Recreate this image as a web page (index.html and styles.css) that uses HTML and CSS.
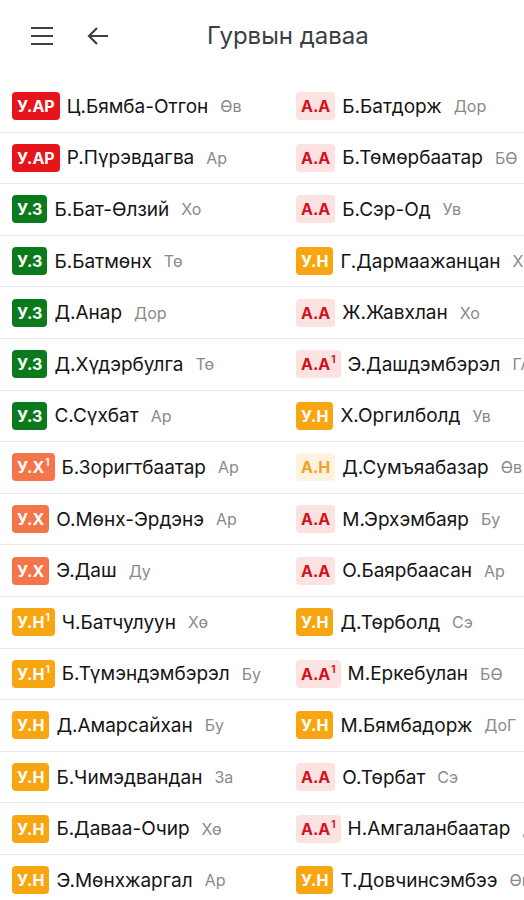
FILE: index.html
```html
<!DOCTYPE html>
<html lang="mn">
<head>
    <meta charset="utf-8">
    <meta name="viewport" content="width=device-width, initial-scale=1">
    <title>Гурвын даваа</title>

    <link rel="stylesheet" href="styles.css">
</head>
<body>
    <div class="header">
        <svg class="icon" width="24" height="24" viewBox="0 0 24 24">
            <path d="M1 4h22M1 12h22M1 20h22" stroke="#3c4043" stroke-width="2.2" fill="none"/>
        </svg>
        <svg class="icon back" width="22" height="20" viewBox="0 0 22 20">
            <path d="M21 10H2M10 2L2 10l8 8" stroke="#3c4043" stroke-width="2.2" fill="none" stroke-linejoin="miter"/>
        </svg>
        <h1 class="title">Гурвын даваа</h1>
    </div>

    <div class="list" id="list"></div>

    <script type="text/javascript">
        let rows=[
            [["ar","У.АР"],"Ц.Бямба-Отгон","Өв",["aa","А.А"],"Б.Батдорж","Дор"],
            [["ar","У.АР"],"Р.Пүрэвдагва","Ар",["aa","А.А"],"Б.Төмөрбаатар","БӨ"],
            [["uz","У.З"],"Б.Бат-Өлзий","Хо",["aa","А.А"],"Б.Сэр-Од","Ув"],
            [["uz","У.З"],"Б.Батмөнх","Тө",["un","У.Н"],"Г.Дармаажанцан","Хо"],
            [["uz","У.З"],"Д.Анар","Дор",["aa","А.А"],"Ж.Жавхлан","Хо"],
            [["uz","У.З"],"Д.Хүдэрбулга","Тө",["aa","А.А",1],"Э.Дашдэмбэрэл","ГА"],
            [["uz","У.З"],"С.Сүхбат","Ар",["un","У.Н"],"Х.Оргилболд","Ув"],
            [["ux","У.Х",1],"Б.Зоригтбаатар","Ар",["an","А.Н"],"Д.Сумъяабазар","Өв"],
            [["ux","У.Х"],"О.Мөнх-Эрдэнэ","Ар",["aa","А.А"],"М.Эрхэмбаяр","Бу"],
            [["ux","У.Х"],"Э.Даш","Ду",["aa","А.А"],"О.Баярбаасан","Ар"],
            [["un","У.Н",1],"Ч.Батчулуун","Хө",["un","У.Н"],"Д.Төрболд","Сэ"],
            [["un","У.Н",1],"Б.Түмэндэмбэрэл","Бу",["aa","А.А",1],"М.Еркебулан","БӨ"],
            [["un","У.Н"],"Д.Амарсайхан","Бу",["un","У.Н"],"М.Бямбадорж","ДоГ"],
            [["un","У.Н"],"Б.Чимэдвандан","За",["aa","А.А"],"О.Төрбат","Сэ"],
            [["un","У.Н"],"Б.Даваа-Очир","Хө",["aa","А.А",1],"Н.Амгаланбаатар","Ду"],
            [["un","У.Н"],"Э.Мөнхжаргал","Ар",["un","У.Н"],"Т.Довчинсэмбээ","Өв"]
        ];

        function cell(badge,name,place)
        {
            let sup=badge[2] ? `<sup class="sup">${badge[2]}</sup>` : "";
            return `<div class="cell"><span class="badge ${badge[0]}">${badge[1]}${sup}</span>`+
                `<span class="name">${name}</span><span class="place">${place}</span></div>`;
        }

        let list=document.getElementById("list");
        rows.forEach((r)=>
        {
            let row=document.createElement("div");
            row.className="row";
            row.innerHTML=cell(r[0],r[1],r[2])+cell(r[3],r[4],r[5]);
            list.appendChild(row);
        });
    </script>
</body>
</html>
```

FILE: styles.css
```css
body
{
    margin: 0;
    font-family: Inter, "Noto Sans", sans-serif;
    background-color: white;
    overflow: hidden;
}
.header
{
    height: 81px;
    display: flex;
    align-items: center;
    padding-left: 30px;
    padding-bottom: 10px;
    box-sizing: border-box;
}
.icon
{
    flex-shrink: 0;
}
.back
{
    margin-left: 33px;
}
.title
{
    margin: 0 0 0 98px;
    font-size: 24px;
    font-weight: 400;
    color: #3c4043;
}
.list
{
    width: 100%;
    overflow: hidden;
}
.row
{
    display: grid;
    grid-template-columns: 284px 1fr;
    height: 51.6px;
    box-sizing: border-box;
    border-bottom: 1.5px solid #ececec;
}
.cell
{
    display: flex;
    align-items: center;
    padding-left: 12px;
    white-space: nowrap;
    overflow: hidden;
}
.badge
{
    height: 28px;
    line-height: 28px;
    padding: 0 5px;
    border-radius: 4px;
    font-size: 16px;
    font-weight: 700;
    color: white;
    flex-shrink: 0;
}
.sup
{
    font-size: 10px;
    vertical-align: top;
    line-height: 18px;
    margin-left: 1px;
}
.ar
{
    background-color: #e8141b;
}
.uz
{
    background-color: #0b7a1c;
}
.ux
{
    background-color: #f4754a;
}
.un
{
    background-color: #f7a612;
}
.aa
{
    background-color: #fde2e2;
    color: #d3111c;
}
.an
{
    background-color: #fff3e0;
    color: #f2a21e;
}
.name
{
    margin-left: 7px;
    font-size: 19px;
    color: #141414;
}
.place
{
    margin-left: 12px;
    font-size: 16px;
    color: #8a8a8a;
}
```
